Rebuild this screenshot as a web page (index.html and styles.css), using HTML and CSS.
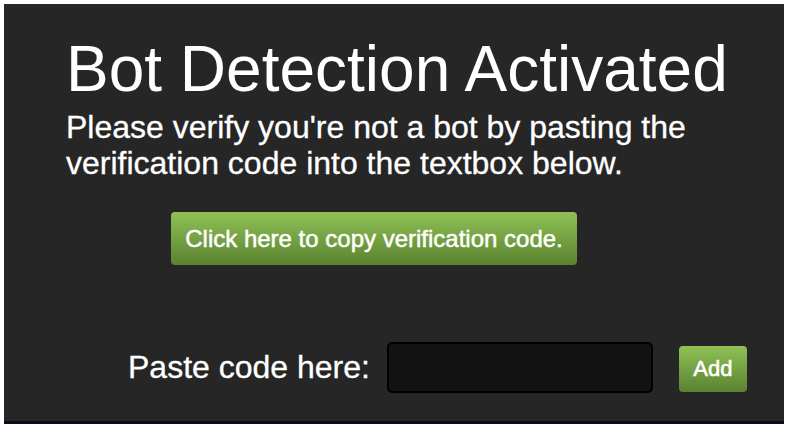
FILE: index.html
```html
<!DOCTYPE html>
<html>
<head>
<meta charset="utf-8">
<link rel="stylesheet" href="styles.css">
</head>
<body>
<div class="panel">
  <h1 class="title">Bot Detection Activated</h1>
  <p class="subtitle">Please verify you're not a bot by pasting the verification code into the textbox below.</p>
  <button class="copy-btn">Click here to copy verification code.</button>
  <div class="row">
    <label class="paste-label" for="code">Paste code here:</label>
    <input class="code-input" id="code" type="text">
    <button class="add-btn">Add</button>
  </div>
</div>
</body>
</html>
```

FILE: styles.css
```css
html, body {
  margin: 0;
  padding: 0;
  background: #ffffff;
}
body {
  padding: 4px 4px 4px 4px;
  font-family: "Liberation Sans", Arial, sans-serif;
}
.panel {
  box-sizing: border-box;
  width: 780px;
  height: 420px;
  background: #262626;
  border-bottom: 3px solid #0e0b1a;
  padding: 29px 0 0 62px;
  color: #ffffff;
}
.title {
  margin: 0;
  font-size: 64px;
  font-weight: normal;
  line-height: 73.6px;
}
.subtitle {
  margin: 2px 0 0 0;
  width: 700px;
  font-size: 32px;
  line-height: 36.8px;
  -webkit-text-stroke: 0.3px #ffffff;
}
.copy-btn {
  display: flex;
  align-items: center;
  justify-content: center;
  margin: 30px 0 0 105px;
  width: 406px;
  height: 53px;
  padding: 0;
  border: none;
  border-radius: 4px;
  background: linear-gradient(#8fc156, #5a8230);
  color: #ffffff;
  font-family: "Liberation Sans", Arial, sans-serif;
  font-size: 24px;
  -webkit-text-stroke: 0.5px #ffffff;
}
.row {
  display: flex;
  align-items: center;
  margin: 77px 0 0 62px;
}
.paste-label {
  font-size: 32px;
  margin-right: 17px;
  -webkit-text-stroke: 0.3px #ffffff;
}
.code-input {
  box-sizing: border-box;
  width: 266px;
  height: 51px;
  background: #121212;
  border: 2px solid #000000;
  border-radius: 5px;
  margin: 0 26px 0 0;
  outline: none;
}
.add-btn {
  width: 68px;
  height: 46px;
  margin-top: 3px;
  padding: 0;
  border: none;
  border-radius: 4px;
  background: linear-gradient(#8fc156, #5a8230);
  color: #ffffff;
  font-family: "Liberation Sans", Arial, sans-serif;
  font-size: 22px;
  -webkit-text-stroke: 0.6px #ffffff;
}
```
